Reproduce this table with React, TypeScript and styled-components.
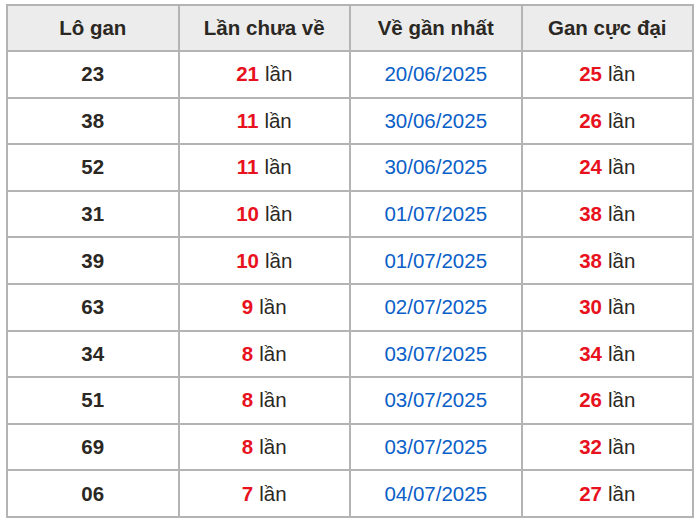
import React from 'react';
import styled, { createGlobalStyle } from 'styled-components';

const GlobalStyle = createGlobalStyle`
  body {
    margin: 0;
    background: #ffffff;
    font-family: "Liberation Sans", Arial, sans-serif;
  }
`;

const Wrap = styled.div`
  padding: 4px 6px;
`;

const Table = styled.div`
  display: grid;
  grid-template-columns: repeat(4, 1fr);
  grid-template-rows: 46px repeat(10, 46.6px);
  width: 688px;
  border-top: 2px solid #b4b4b4;
  border-left: 2px solid #b4b4b4;
  box-sizing: border-box;
`;

const HeadCell = styled.div`
  display: flex;
  align-items: center;
  justify-content: center;
  background: #ececec;
  border-right: 2px solid #b4b4b4;
  border-bottom: 2px solid #b4b4b4;
  color: #2b2823;
  font-size: 20.5px;
  font-weight: bold;
`;

const Cell = styled.div`
  display: flex;
  align-items: center;
  justify-content: center;
  border-right: 2px solid #b4b4b4;
  border-bottom: 2px solid #b4b4b4;
  font-size: 20.5px;
  color: #2b2823;
`;

const Num = styled.span`
  font-weight: bold;
  color: #2b2823;
`;

const Count = styled.span`
  font-weight: bold;
  color: #e8121e;
  margin-right: 6px;
`;

const DateText = styled.span`
  color: #0b60c8;
`;

const rows = [
  { lo: '23', cur: 21, date: '20/06/2025', max: 25 },
  { lo: '38', cur: 11, date: '30/06/2025', max: 26 },
  { lo: '52', cur: 11, date: '30/06/2025', max: 24 },
  { lo: '31', cur: 10, date: '01/07/2025', max: 38 },
  { lo: '39', cur: 10, date: '01/07/2025', max: 38 },
  { lo: '63', cur: 9, date: '02/07/2025', max: 30 },
  { lo: '34', cur: 8, date: '03/07/2025', max: 34 },
  { lo: '51', cur: 8, date: '03/07/2025', max: 26 },
  { lo: '69', cur: 8, date: '03/07/2025', max: 32 },
  { lo: '06', cur: 7, date: '04/07/2025', max: 27 },
];

const headers = ['Lô gan', 'Lần chưa về', 'Về gần nhất', 'Gan cực đại'];

const App = () => {
  return (
    <>
      <GlobalStyle />
      <Wrap>
        <Table>
          {headers.map(h => (
            <HeadCell key={h}>{h}</HeadCell>
          ))}
          {rows.map(r => (
            <React.Fragment key={r.lo}>
              <Cell><Num>{r.lo}</Num></Cell>
              <Cell><Count>{r.cur}</Count>lần</Cell>
              <Cell><DateText>{r.date}</DateText></Cell>
              <Cell><Count>{r.max}</Count>lần</Cell>
            </React.Fragment>
          ))}
        </Table>
      </Wrap>
    </>
  );
};

export default App;
